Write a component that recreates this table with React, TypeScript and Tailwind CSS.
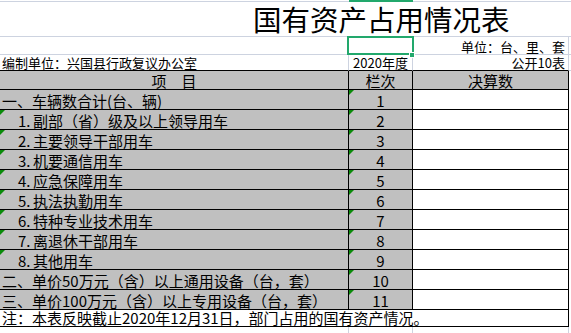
import React from 'react';

// 表格行数据
const rows = [
  { num: '', label: '一、车辆数合计(台、辆)', no: '1', tri: false },
  { num: '1.', label: '副部（省）级及以上领导用车', no: '2', tri: true },
  { num: '2.', label: '主要领导干部用车', no: '3', tri: true },
  { num: '3.', label: '机要通信用车', no: '4', tri: true },
  { num: '4.', label: '应急保障用车', no: '5', tri: true },
  { num: '5.', label: '执法执勤用车', no: '6', tri: true },
  { num: '6.', label: '特种专业技术用车', no: '7', tri: true },
  { num: '7.', label: '离退休干部用车', no: '8', tri: true },
  { num: '8.', label: '其他用车', no: '9', tri: true },
  { num: '', label: '二、单价50万元（含）以上通用设备（台，套）', no: '10', tri: false },
  { num: '', label: '三、单价100万元（含）以上专用设备（台，套）', no: '11', tri: false },
];

function Tri() {
  return (
    <svg className="absolute top-0 left-0" width="5" height="5" viewBox="0 0 5 5">
      <polygon points="0,0 5,0 0,5" fill="#0a8a0a" />
    </svg>
  );
}

export default function App() {
  return (
    <div className="w-[571px] h-[333px] overflow-hidden bg-white text-black font-['Noto_Sans_CJK_SC',sans-serif] leading-none">
      {/* 顶部细线 */}
      <div className="grid grid-cols-[349px_64px_158px] h-[2px]">
        <div className="border-b border-[#cdd3e0]" />
        <div className="bg-[#22a86c]" />
        <div className="border-b border-[#cdd3e0]" />
      </div>

      {/* 标题 */}
      <div className="h-[35px] border-b border-[#cdd3e0] flex items-end pl-[253px] pb-[3px]">
        <span className="text-[28.5px]">国有资产占用情况表</span>
      </div>

      {/* 单位 */}
      <div className="grid grid-cols-[349px_64px_156px_2px] h-[18px] border-b border-[#cdd3e0]">
        <div className="border-r border-[#cdd3e0]" />
        <div className="relative">
          <div className="absolute left-[-2px] top-[-1px] w-[67px] h-[19px] border-[2.5px] border-[#22a86c]" />
          <div className="absolute left-[60px] top-[15px] w-[6px] h-[6px] bg-[#22a86c] border border-white" />
        </div>
        <div className="border-r border-[#cdd3e0] flex items-end justify-end pr-[3px] pb-[1px] text-[13px]">
          单位：台、里、套
        </div>
        <div />
      </div>

      {/* 编制单位 */}
      <div className="grid grid-cols-[349px_64px_156px_2px] h-[16px] text-[13px]">
        <div className="border-r border-[#cdd3e0] border-b border-b-black flex items-end pl-[2px] pb-[1px]">
          编制单位：兴国县行政复议办公室
        </div>
        <div className="border-r border-[#cdd3e0] border-b border-b-black flex items-end justify-center pb-[1px]">
          2020年度
        </div>
        <div className="border-r border-[#cdd3e0] border-b border-b-black flex items-end justify-end pr-[3px] pb-[1px]">
          公开10表
        </div>
        <div className="border-b border-[#cdd3e0]" />
      </div>

      {/* 表头 */}
      <div className="grid grid-cols-[349px_64px_156px] h-[19px] text-[15px] bg-[#c0c0c0] w-[569px]">
        <div className="border-r border-b border-black flex items-end justify-center pb-[1px]">项　目</div>
        <div className="border-r border-b border-black flex items-end justify-center pb-[1px]">栏次</div>
        <div className="border-r border-b border-black flex items-end justify-center pb-[1px]">决算数</div>
      </div>

      {/* 数据行 */}
      {rows.map((r) => (
        <div key={r.no} className="grid grid-cols-[349px_64px_156px] h-[20px] text-[15px] w-[569px]">
          <div className="relative bg-[#c0c0c0] border-r border-b border-black flex items-end pl-[2px] pb-[1px]">
            {r.tri && <Tri />}
            {r.num ? (
              <span className="pl-[16px] flex items-end">
                <span className="inline-block w-[15px]">{r.num}</span>
                {r.label}
              </span>
            ) : (
              r.label
            )}
          </div>
          <div className="relative bg-[#c0c0c0] border-r border-b border-black flex items-end justify-center pb-[1px]">
            <Tri />
            {r.no}
          </div>
          <div className="bg-white border-r border-b border-black" />
        </div>
      ))}

      {/* 注释 */}
      <div className="w-[569px] h-[17px] border-r border-b border-black flex items-end pl-[2px] pb-[1px] text-[15px]">
        注：本表反映截止2020年12月31日，部门占用的国有资产情况。
      </div>

      {/* 底部网格线 */}
      <div className="grid grid-cols-[349px_64px_156px] h-[7px] w-[569px]">
        <div className="border-r border-[#cdd3e0]" />
        <div className="border-r border-[#cdd3e0]" />
        <div className="border-r border-[#cdd3e0]" />
      </div>
    </div>
  );
}
